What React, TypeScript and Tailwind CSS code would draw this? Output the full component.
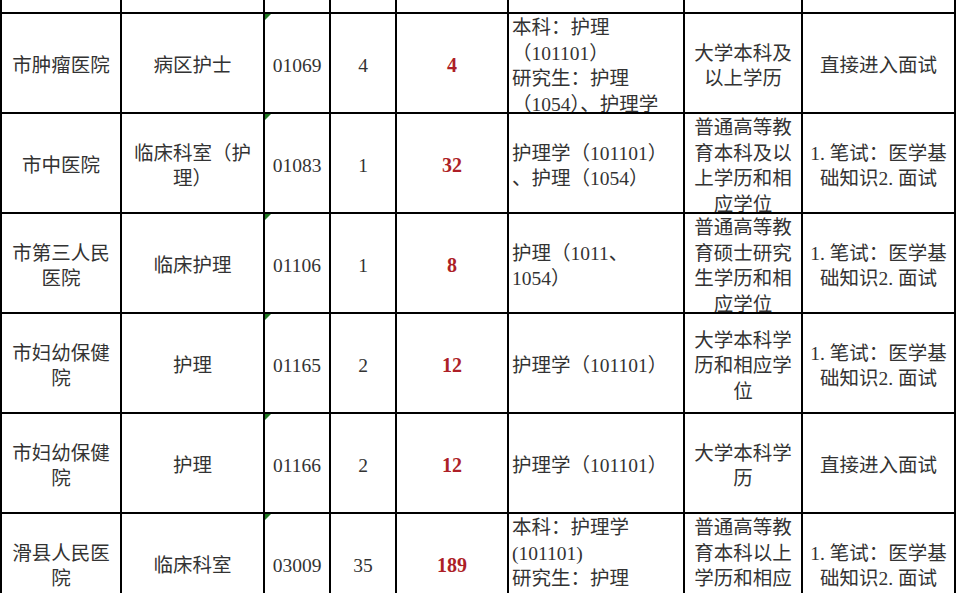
import React from 'react';

type Cell = { lines: string[]; red?: boolean; left?: boolean; flag?: boolean; tail?: boolean };

const rows: string[][][] = [
    [
        ['市肿瘤医院'],
        ['病区护士'],
        ['01069'],
        ['4'],
        ['4'],
        ['本科：护理', '（101101）', '研究生：护理', '（1054）、护理学'],
        ['大学本科及', '以上学历'],
        ['直接进入面试'],
    ],
    [
        ['市中医院'],
        ['临床科室（护', '理）'],
        ['01083'],
        ['1'],
        ['32'],
        ['护理学（101101）', '、护理（1054）'],
        ['普通高等教', '育本科及以', '上学历和相', '应学位'],
        ['1. 笔试：医学基', '础知识2. 面试'],
    ],
    [
        ['市第三人民', '医院'],
        ['临床护理'],
        ['01106'],
        ['1'],
        ['8'],
        ['护理（1011、', '1054）'],
        ['普通高等教', '育硕士研究', '生学历和相', '应学位'],
        ['1. 笔试：医学基', '础知识2. 面试'],
    ],
    [
        ['市妇幼保健', '院'],
        ['护理'],
        ['01165'],
        ['2'],
        ['12'],
        ['护理学（101101）'],
        ['大学本科学', '历和相应学', '位'],
        ['1. 笔试：医学基', '础知识2. 面试'],
    ],
    [
        ['市妇幼保健', '院'],
        ['护理'],
        ['01166'],
        ['2'],
        ['12'],
        ['护理学（101101）'],
        ['大学本科学', '历'],
        ['直接进入面试'],
    ],
    [
        ['滑县人民医', '院'],
        ['临床科室'],
        ['03009'],
        ['35'],
        ['189'],
        ['本科：护理学', '(101101)', '研究生：护理'],
        ['普通高等教', '育本科以上', '学历和相应'],
        ['1. 笔试：医学基', '础知识2. 面试'],
    ],
];

const TableCell: React.FC<Cell> = ({ lines, red, left, flag, tail }) => (
    <div
        className={`relative bg-white overflow-hidden flex items-center pt-[6px] ${tail ? 'pb-[25px]' : ''} ${left ? 'justify-start pl-[3px] text-left' : 'justify-center text-center'}`}
    >
        {flag && (
            <div className="absolute top-0 left-0 w-0 h-0 border-t-[6px] border-r-[6px] border-t-[#1f7a22] border-r-transparent" />
        )}
        <div className={`whitespace-nowrap leading-[25.5px] ${red ? 'text-[#ad1f27] font-bold text-[20px]' : 'text-[#333333]'}`}>
            {lines.map((l, i) => (
                <div key={i}>{l}</div>
            ))}
        </div>
    </div>
);

const App: React.FC = () => {
    return (
        <div
            className="w-[957px] h-[593px] overflow-hidden bg-white text-[19.5px]"
            style={{ fontFamily: '"Liberation Serif", "Noto Sans CJK SC", serif' }}
        >
            <div className="grid w-[956px] bg-black gap-[2px] px-[2px] grid-cols-[118px_141px_64px_64px_110px_174px_116px_151px] grid-rows-[12px_repeat(6,98px)]">
                {Array.from({ length: 8 }).map((_, i) => (
                    <div key={`top-${i}`} className="bg-white" />
                ))}
                {rows.map((row, r) =>
                    row.map((lines, c) => (
                        <TableCell
                            key={`${r}-${c}`}
                            lines={lines}
                            red={c === 4}
                            left={c === 5}
                            flag={c === 2}
                            tail={r === 5 && (c === 5 || c === 6)}
                        />
                    ))
                )}
            </div>
        </div>
    );
};

export default App;
